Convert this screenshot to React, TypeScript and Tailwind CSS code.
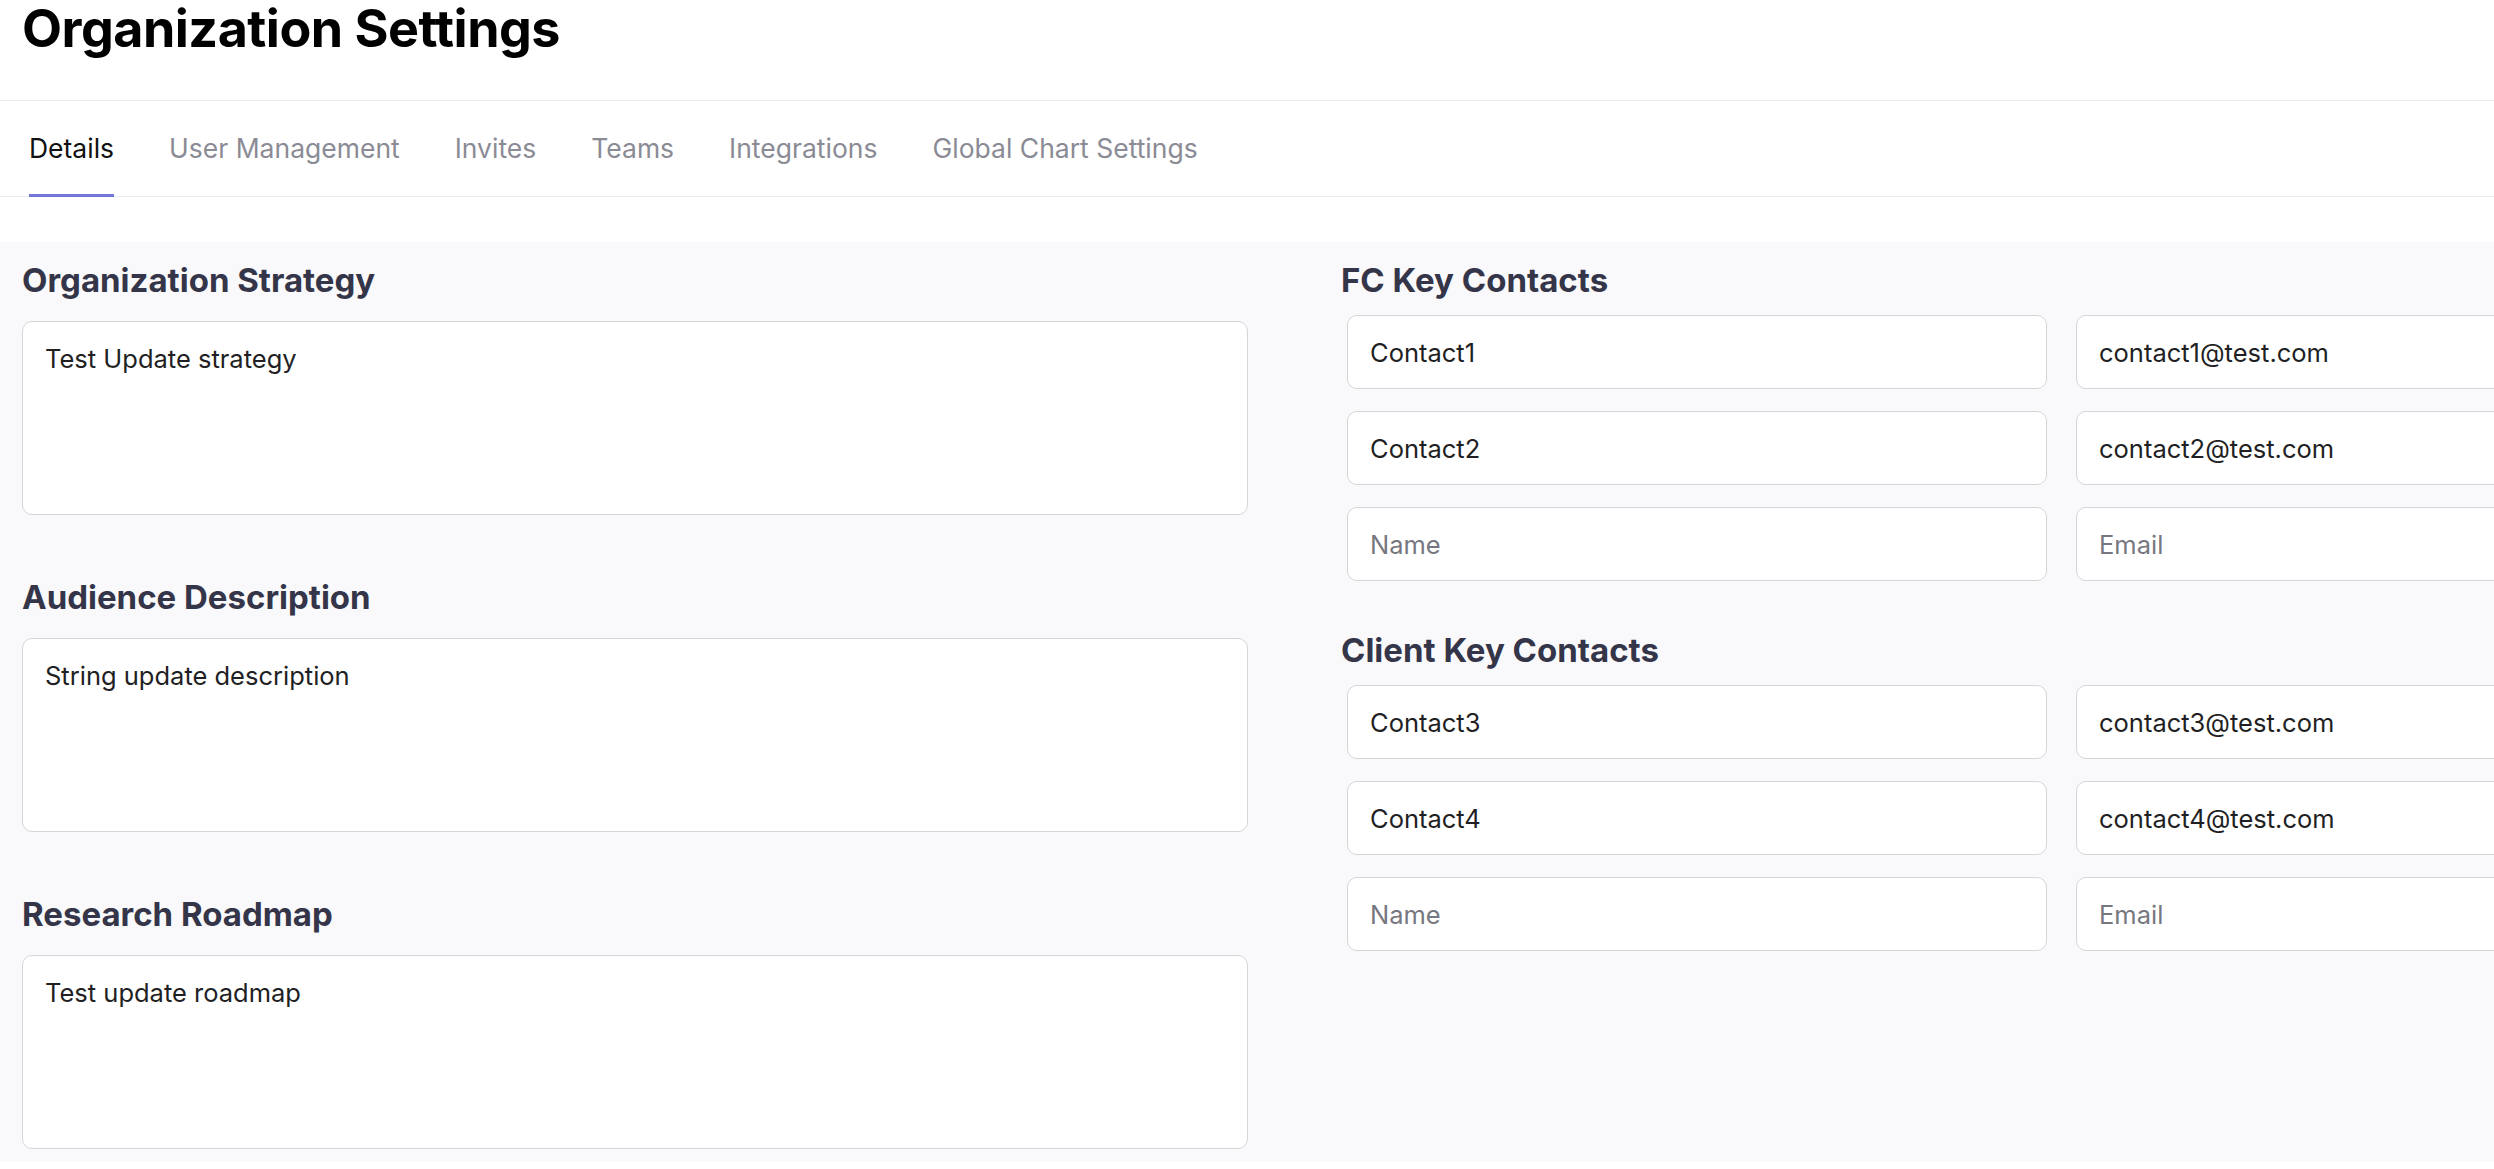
const tabs = ['Details', 'User Management', 'Invites', 'Teams', 'Integrations', 'Global Chart Settings'];

const sections = [
  { title: 'Organization Strategy', value: 'Test Update strategy' },
  { title: 'Audience Description', value: 'String update description' },
  { title: 'Research Roadmap', value: 'Test update roadmap' },
];

const fcContacts = [
  { name: 'Contact1', email: 'contact1@test.com' },
  { name: 'Contact2', email: 'contact2@test.com' },
];

const clientContacts = [
  { name: 'Contact3', email: 'contact3@test.com' },
  { name: 'Contact4', email: 'contact4@test.com' },
];

function SectionTitle({ children }: { children: string }) {
  return (
    <h2 className="text-[33px] leading-[36px] font-bold text-[#35354a]">{children}</h2>
  );
}

function ContactField({ value, placeholder }: { value?: string; placeholder: string }) {
  return (
    <input
      type="text"
      defaultValue={value}
      placeholder={placeholder}
      className="w-[700px] h-[74px] shrink-0 rounded-[10px] border border-[#d6d6da] bg-white px-[22px] text-[25.5px] text-[#1f1f24] placeholder:text-[#77777f] outline-none"
    />
  );
}

function ContactGroup({ title, contacts }: { title: string; contacts: { name: string; email: string }[] }) {
  return (
    <div className="flex flex-col">
      <SectionTitle>{title}</SectionTitle>
      <div className="mt-[17px] ml-[6px] flex flex-col gap-[22px]">
        {contacts.map((c) => (
          <div key={c.name} className="flex gap-[29px]">
            <ContactField value={c.name} placeholder="Name" />
            <ContactField value={c.email} placeholder="Email" />
          </div>
        ))}
        <div className="flex gap-[29px]">
          <ContactField placeholder="Name" />
          <ContactField placeholder="Email" />
        </div>
      </div>
    </div>
  );
}

export default function App() {
  return (
    <div className="w-[2494px] h-[1169px] overflow-hidden bg-white font-['Inter',sans-serif]">
      <div className="h-[100px] pl-[22px]">
        <h1 className="text-[52px] leading-[58px] font-bold tracking-[-0.01em] text-black">Organization Settings</h1>
      </div>

      <nav className="flex h-[97px] gap-[55px] border-y border-[#ececee] pl-[29px]">
        {tabs.map((tab, i) => (
          <button
            key={tab}
            type="button"
            className={`flex items-center pt-[3px] border-b-[3px] -mb-px text-[26.5px] ${
              i === 0 ? 'border-[#7477d9] text-[#111111]' : 'border-transparent text-[#8b8b95]'
            }`}
          >
            {tab}
          </button>
        ))}
      </nav>

      <div className="mt-[45px] flex h-[920px] gap-[93px] bg-[#f9f9fb] pl-[22px] pt-[20px]">
        <div className="flex w-[1226px] shrink-0 flex-col gap-[64px]">
          {sections.map((s) => (
            <div key={s.title} className="flex flex-col gap-[23px]">
              <SectionTitle>{s.title}</SectionTitle>
              <textarea
                defaultValue={s.value}
                className="h-[194px] resize-none rounded-[10px] border border-[#d6d6da] bg-white px-[22px] pt-[18px] text-[25.5px] leading-[1.5] text-[#1f1f24] outline-none"
              />
            </div>
          ))}
        </div>

        <div className="flex shrink-0 flex-col gap-[51px]">
          <ContactGroup title="FC Key Contacts" contacts={fcContacts} />
          <ContactGroup title="Client Key Contacts" contacts={clientContacts} />
        </div>
      </div>
    </div>
  );
}
